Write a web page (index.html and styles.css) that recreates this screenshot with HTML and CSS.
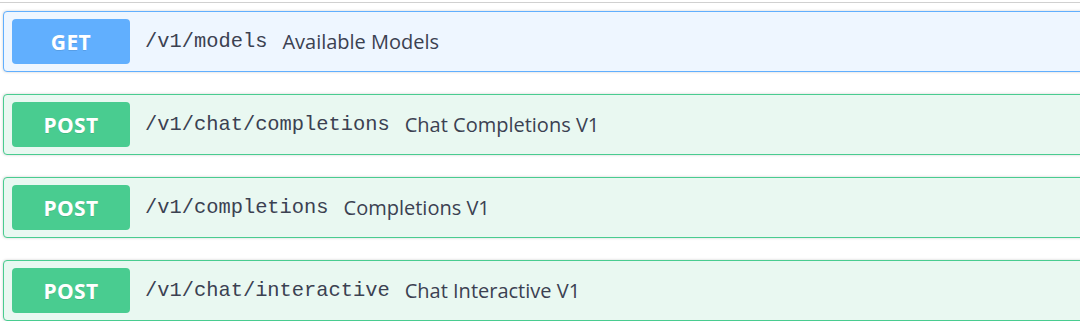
FILE: index.html
```html
<!DOCTYPE html>
<html lang="en">
<head>
  <meta charset="UTF-8">
  <title>API</title>
  <link rel="stylesheet" href="styles.css">
</head>
<body>
  <div class="top-rule"></div>

  <div class="ops">
    <div class="opblock get">
      <span class="method">GET</span>
      <span class="path">/v1/models</span>
      <span class="summary">Available Models</span>
    </div>

    <div class="opblock post">
      <span class="method">POST</span>
      <span class="path">/v1/chat/completions</span>
      <span class="summary">Chat Completions V1</span>
    </div>

    <div class="opblock post">
      <span class="method">POST</span>
      <span class="path">/v1/completions</span>
      <span class="summary">Completions V1</span>
    </div>

    <div class="opblock post">
      <span class="method">POST</span>
      <span class="path">/v1/chat/interactive</span>
      <span class="summary">Chat Interactive V1</span>
    </div>
  </div>
</body>
</html>
```

FILE: styles.css
```css
* {
  box-sizing: border-box;
}

body {
  margin: 0;
  width: 1080px;
  overflow: hidden;
  background: #fff;
  color: #3b4151;
  font-family: "Open Sans", "Noto Sans", sans-serif;
}

.top-rule {
  margin-top: 2px;
  height: 1px;
  background-color: #d0d0d0;
}

.ops {
  display: flex;
  flex-direction: column;
  gap: 22px;
  padding: 8px 0 0 3px;
  width: 1110px;
}

.opblock {
  display: flex;
  align-items: center;
  height: 61px;
  padding: 0 8px;
  border: 1px solid;
  border-radius: 4px;
  box-shadow: 0 0 3px rgba(0, 0, 0, 0.19);
}

.opblock.get {
  background-color: #eef6ff;
  border-color: #61affe;
}

.opblock.post {
  background-color: #e9f8f1;
  border-color: #49cc90;
}

.method {
  width: 118px;
  height: 45px;
  display: flex;
  align-items: center;
  justify-content: center;
  border-radius: 4px;
  color: #fff;
  font-size: 21px;
  font-weight: 700;
  letter-spacing: 0.4px;
  text-shadow: 0 1px 0 rgba(0, 0, 0, 0.1);
}

.get .method {
  background-color: #61affe;
}

.post .method {
  background-color: #49cc90;
}

.path {
  margin-left: 15px;
  font-family: "Liberation Mono", monospace;
  font-size: 20.4px;
  color: #3b4151;
}

.summary {
  margin-left: 15px;
  font-size: 20px;
  color: #3b4151;
}
```
